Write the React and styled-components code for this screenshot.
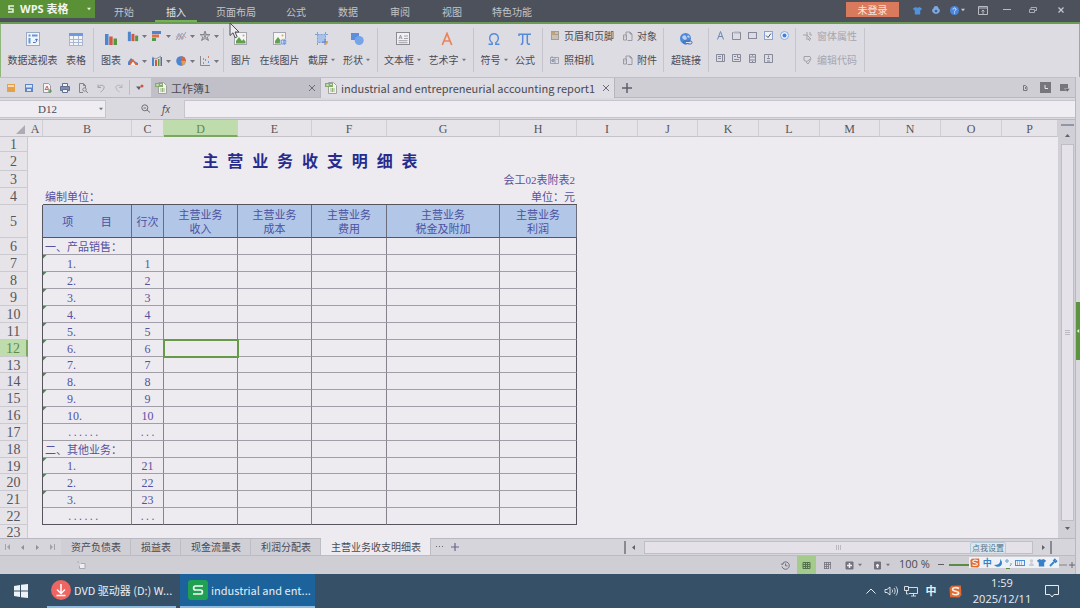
import React from "react";
import styled, { createGlobalStyle, css } from "styled-components";

const GlobalStyle = createGlobalStyle`
  * {
    box-sizing: border-box;
  }
  body {
    margin: 0;
    background: #edebf0;
    color: #4a4a52;
    font-family: "Open Sans", "Noto Sans CJK SC", sans-serif;
    font-size: 10px;
    line-height: 14px;
  }
  button,
  input {
    font: inherit;
    color: inherit;
    margin: 0;
    padding: 0;
    border: 0;
    border-radius: 0;
    background: none;
    outline: none;
  }
  svg {
    display: block;
    flex: none;
  }
`;

const Page = styled.div`
  display: flex;
  flex-direction: column;
  height: 100vh;
  overflow: hidden;
`;

/* ---------- title bar ---------- */
const TitleBar = styled.header`
  display: flex;
  flex: none;
  height: 24px;
  background: #4d515b;
  border-bottom: 2px solid #6a9a54;
  color: #c9cad0;
`;
const Brand = styled.button`
  display: flex;
  align-items: center;
  width: 95px;
  height: 18px;
  padding: 0 4px 0 8px;
  gap: 6px;
  background: #5a9136;
  color: #f1f5ee;
  font-size: 11px;
  font-weight: 700;
  white-space: nowrap;
  > :last-child {
    margin-left: auto;
  }
`;
const Menu = styled.nav`
  display: flex;
  flex: 1;
  padding-left: 3px;
`;
const MenuItem = styled.button`
  width: ${(p) => (p.$wide ? 68 : 52)}px;
  height: 22px;
  padding-top: 2px;
  background: ${(p) =>
    p.$active
      ? "linear-gradient(#76b153, #76b153) center bottom / 42px 2px no-repeat"
      : "none"};
  color: ${(p) => (p.$active ? "#e6e6ea" : "#c3c4ca")};
`;
const Login = styled.button`
  width: 53px;
  height: 15px;
  margin: 2px 9px 0 0;
  background: #da7a5c;
  color: #f6e6df;
`;
const WinButton = styled.button`
  display: flex;
  align-items: center;
  justify-content: center;
  gap: 2px;
  width: ${(p) => p.$w}px;
  height: 20px;
`;
const WinButtons = styled.div`
  display: flex;
  padding-right: 8px;
`;

/* ---------- ribbon ---------- */
const Ribbon = styled.section`
  display: flex;
  flex: none;
  height: 53px;
  background: #dedce3;
  border-left: 1px solid #8fb77b;
  border-right: 1px solid #8fb77b;
  > :first-child {
    margin-left: -1px;
  }
`;
const Group = styled.div`
  display: flex;
  flex: none;
  margin: 4px 0 5px;
  padding: 0 3px;
  border-right: 1px solid #c6c4cc;
`;
const BigButton = styled.button`
  display: flex;
  flex-direction: column;
  align-items: center;
  flex: none;
  width: ${(p) => p.$w}px;
  padding-top: 4px;
  gap: 7px;
  white-space: nowrap;
`;
const Label = styled.span`
  display: flex;
  align-items: center;
  gap: 3px;
`;
const MiniGrid = styled.div`
  display: grid;
  grid-template-columns: repeat(4, 20px);
  grid-template-rows: 14px 14px;
  gap: 11px 4px;
  padding: 1px 1px 0 2px;
`;
const MiniButton = styled.button`
  display: flex;
  align-items: center;
  gap: 3px;
`;
const CommandGrid = styled.div`
  display: grid;
  grid-template-columns: ${(p) => p.$columns};
  grid-template-rows: 14px 14px;
  row-gap: 10px;
  padding-top: 1px;
  color: ${(p) => (p.$disabled ? "#a7a5ad" : "inherit")};
`;
const Command = styled.button`
  display: flex;
  align-items: center;
  gap: 4px;
  padding-left: 3px;
  white-space: nowrap;
`;
const FormGrid = styled.div`
  display: grid;
  grid-template-columns: repeat(5, 16px);
  grid-template-rows: 14px 14px;
  row-gap: 9px;
`;
const IconButton = styled.button`
  display: flex;
  align-items: center;
  justify-content: center;
  gap: 4px;
  flex: none;
  width: ${(p) => (p.$w ? p.$w + "px" : "auto")};
  background: ${(p) => (p.$on ? "#a4cb8c" : "none")};
`;

/* ---------- workspace ---------- */
const Body = styled.div`
  display: flex;
  flex: 1;
  min-height: 0;
`;
const Work = styled.main`
  display: flex;
  flex-direction: column;
  flex: 1;
  min-width: 0;
`;
const Rail = styled.aside`
  display: flex;
  align-items: flex-start;
  flex: none;
  width: 4px;
  padding-top: 225px;
  background: #d9d8df;
  box-shadow: -1px 0 #b9b8c1;
`;
const RailHandle = styled.button`
  display: flex;
  align-items: center;
  width: 4px;
  height: 58px;
  background: #5d9440;
`;
const DocBar = styled.div`
  display: flex;
  flex: none;
  height: 21px;
  background: #cfced5;
  border-top: 1px solid #c0bfc8;
  border-bottom: 1px solid #b9b8c0;
`;
const Quick = styled.div`
  display: flex;
  flex: none;
  width: 151px;
  padding-left: 2px;
  background: #dad9df;
`;
const QuickDivider = styled.span`
  width: 1px;
  margin: 2px 1px;
  background: #bebdc5;
`;
const DocTab = styled.div`
  display: flex;
  align-items: center;
  flex: none;
  width: ${(p) => p.$w}px;
  padding: 0 4px;
  gap: 4px;
  margin-bottom: ${(p) => (p.$active ? -1 : 0)}px;
  background: ${(p) => (p.$active ? "#dfdee4" : "#c1c0c9")};
  border-right: 1px solid #b6b5be;
`;
const DocName = styled.button`
  flex: 1;
  text-align: left;
  white-space: nowrap;
  font-family: "Noto Sans CJK SC", sans-serif;
  font-size: 11px;
`;
const DocTools = styled.div`
  display: flex;
  margin-left: auto;
  padding-right: 1px;
`;
const FormulaBar = styled.div`
  display: flex;
  align-items: center;
  flex: none;
  height: 22px;
  background: #dad9df;
  border-bottom: 1px solid #b9b8c0;
`;
const NameBox = styled.div`
  display: flex;
  align-items: center;
  width: 106px;
  height: 18px;
  padding-right: 2px;
  background: #efedf2;
  border: 1px solid #c6c5cd;
  border-left: 0;
  input {
    flex: 1;
    min-width: 0;
    padding-right: 4px;
    text-align: center;
    font-family: "Liberation Serif", serif;
    font-size: 11px;
  }
`;
const FormulaTools = styled.div`
  display: flex;
  width: 78px;
  padding-left: 29px;
`;
const FormulaInput = styled.input`
  flex: 1;
  min-width: 0;
  height: 18px;
  background: #efedf2;
  border: 1px solid #c6c5cd;
`;

/* ---------- sheet ---------- */
const SheetArea = styled.div`
  display: flex;
  flex: 1;
  min-height: 0;
`;
const SheetView = styled.div`
  flex: 1;
  min-width: 0;
  overflow: hidden;
  background: #edebf0;
`;
const Sheet = styled.table`
  width: 100%;
  table-layout: fixed;
  border-spacing: 0;
  color: #5552a0;
  font-family: "Liberation Serif", "Noto Sans CJK SC", serif;
  font-size: 11px;
  line-height: 14px;
  td,
  th {
    padding: 0;
    white-space: nowrap;
  }
`;
const Corner = styled.th`
  height: 17px;
  background: #e6e4e8;
  border-bottom: 1px solid #c4c3ca;
  svg {
    margin: 3px 0 0 16px;
  }
`;
const ColHead = styled.th`
  && {
    padding-top: 2px;
  }
  height: 17px;
  font-size: 12px;
  font-weight: 400;
  line-height: 12px;
  background: ${(p) => (p.$on ? "#bfdcad" : "#e6e4e8")};
  color: ${(p) => (p.$on ? "#5f8a4a" : "#56555c")};
  border-bottom: ${(p) => (p.$on ? "2px solid #7ba763" : "1px solid #c4c3ca")};
  border-right: 1px solid #d0ced5;
`;
const RowHead = styled.th`
  && {
    padding-top: 2px;
  }
  height: ${(p) => p.$h}px;
  font-size: 14px;
  font-weight: 400;
  line-height: 12px;
  background: ${(p) => (p.$on ? "#bfdcad" : "#e6e4e8")};
  color: ${(p) => (p.$on ? "#5f8a4a" : "#56555c")};
  border-bottom: ${(p) => (p.$last ? 0 : "1px solid #cccad1")};
  border-right: ${(p) => (p.$on ? "2px solid #7ba763" : "1px solid #cccad1")};
`;
const Margin = styled.td`
  border-right: ${(p) => (p.$edge ? "1px solid #56555d" : 0)};
`;
const Title = styled.td`
  && {
    white-space: pre;
  }
  text-align: center;
  font-family: "Liberation Sans", "Noto Sans CJK SC", sans-serif;
  font-size: 16px;
  font-weight: 700;
  color: #262c8e;
`;
const Note = styled.td`
  && {
    padding: 1px 2px 0;
  }
  text-align: ${(p) => p.$align};
  border-bottom: ${(p) => (p.$edge ? "1px solid #56555d" : 0)};
`;
const HeadCell = styled.th`
  && {
    padding-top: 2px;
    white-space: pre;
  }
  font-weight: 400;
  background: #b2c6e7;
  color: #4a51a0;
  border-right: 1px solid #6b6c7c;
  border-bottom: 1px solid #56555d;
`;
const Cell = styled.td`
  && {
    padding: 1px 0 0 ${(p) => (p.$item ? (p.$indent ? 24 : 2) : 0)}px;
  }
  text-align: ${(p) => (p.$item ? "left" : "center")};
  font-size: ${(p) => (p.$num ? 12 : 11)}px;
  border-right: 1px solid ${(p) => (p.$last ? "#56555d" : "#85838b")};
  border-bottom: 1px solid ${(p) => (p.$bottom ? "#56555d" : "#a09ea6")};
  ${(p) =>
    p.$flag &&
    css`
      background: linear-gradient(135deg, #3f8a4c 2px, transparent 3px);
    `}
  ${(p) =>
    p.$selected &&
    css`
      outline: 2px solid #659a49;
      outline-offset: -1px;
    `}
`;
const Dots = styled.span`
  font-family: "Liberation Mono", monospace;
  font-size: 9px;
  line-height: 12px;
`;
const VScroll = styled.div`
  display: flex;
  flex-direction: column;
  align-items: center;
  flex: none;
  width: 18px;
  padding: 4px 0 2px;
  background: #d1d0d7;
`;
const Splitter = styled.span`
  width: 13px;
  height: 2px;
  background: #9295a4;
`;
const VThumb = styled.div`
  display: flex;
  align-items: center;
  justify-content: center;
  flex: 1;
  width: 13px;
  background: #e5e3e9;
  border: 1px solid #bfbec7;
`;
const ScrollButton = styled.button`
  display: flex;
  align-items: center;
  justify-content: center;
  flex: none;
  width: ${(p) => (p.$side ? 14 : 18)}px;
  height: ${(p) => (p.$side ? 15 : 18)}px;
`;

/* ---------- sheet tabs and status ---------- */
const SheetBar = styled.div`
  display: flex;
  flex: none;
  height: 18px;
  background: #d6d5db;
  border-top: 1px solid #b9b8c0;
  border-bottom: 1px solid #bcbbc4;
`;
const SheetNav = styled.div`
  display: flex;
  width: 61px;
  color: #9b9aa4;
`;
const SheetTab = styled.button`
  flex: none;
  padding: 0 9px 0 10px;
  white-space: nowrap;
  background: ${(p) => (p.$active ? "#edebf0" : "#d0cfd6")};
  border-right: 1px solid #bebdc6;
  margin-top: ${(p) => (p.$active ? -1 : 0)}px;
`;
const HScroll = styled.div`
  display: flex;
  align-items: center;
  flex: none;
  width: 42%;
  margin-left: auto;
  padding-right: 24px;
`;
const Bar = styled.span`
  width: 2px;
  height: 13px;
  background: #8a8994;
`;
const HThumb = styled.div`
  position: relative;
  display: flex;
  align-items: center;
  justify-content: center;
  flex: 1;
  height: 13px;
  margin: 0 3px 0 4px;
  background: #e4e2e8;
  border: 1px solid #c0bfc8;
`;
const Tip = styled.span`
  position: absolute;
  right: 26px;
  top: 0;
  width: 36px;
  height: 12px;
  background: #dce7ee;
  border: 1px solid #b5cbd9;
  border-radius: 2px;
  color: #4e7391;
  font-size: 8px;
  line-height: 10px;
  text-align: center;
  white-space: nowrap;
`;
const Status = styled.footer`
  display: flex;
  flex: none;
  height: 18px;
  background: #cfced5;
`;
const StatusLeft = styled.div`
  display: flex;
  align-items: center;
  flex: 1;
  padding-left: 77px;
`;
const ZoomText = styled.span`
  width: 38px;
  padding-left: 4px;
  font-size: 11px;
  line-height: 16px;
`;
const ZoomTrack = styled.div`
  position: relative;
  display: flex;
  align-items: center;
  width: 118px;
  input {
    width: 100%;
    height: 2px;
    appearance: none;
    background: linear-gradient(90deg, #5d8b45 50%, #a9a8b2 50%);
  }
  input::-webkit-slider-thumb {
    appearance: none;
    width: 4px;
    height: 8px;
    background: #5d8b45;
  }
`;
const Ime = styled.div`
  position: absolute;
  left: 20px;
  top: 1px;
  display: flex;
  align-items: center;
  justify-content: space-around;
  width: 90px;
  height: 11px;
  background: #eef1f6;
  color: #3681c8;
  font-size: 9px;
  font-weight: 700;
  line-height: 11px;
`;

/* ---------- taskbar ---------- */
const Taskbar = styled.footer`
  display: flex;
  flex: none;
  height: 34px;
  background: #365067;
  color: #e8edf1;
  font-size: 11px;
`;
const Start = styled.button`
  display: flex;
  align-items: center;
  justify-content: center;
  width: 41px;
`;
const TaskButton = styled.button`
  display: flex;
  align-items: center;
  width: ${(p) => p.$w}px;
  margin-left: ${(p) => (p.$active ? 4 : 6)}px;
  padding-left: ${(p) => (p.$active ? 8 : 4)}px;
  gap: 3px;
  white-space: nowrap;
  font-family: "Noto Sans CJK SC", sans-serif;
  background: ${(p) => (p.$active ? "#1c639b" : "none")};
  border-bottom: 2px solid #8dbce0;
`;
const Tray = styled.div`
  display: flex;
  align-items: center;
  margin-left: auto;
  padding-right: 16px;
`;
const Lang = styled.span`
  width: 20px;
  text-align: center;
  font-weight: 700;
`;
const Clock = styled.time`
  width: 66px;
  text-align: center;
  line-height: 16px;
  margin-right: 5px;
`;
const Pointer = styled.svg`
  position: absolute;
  left: 229px;
  top: 22px;
`;

/* ---------- icons ---------- */
const Svg = ({ s = 12, w, h, children, ...rest }) => (
  <svg
    width={w || s}
    height={h || s}
    viewBox={`0 0 ${w || s} ${h || s}`}
    fill="none"
    stroke="currentColor"
    aria-hidden="true"
    {...rest}
  >
    {children}
  </svg>
);
const Caret = ({ dir = "down", c = "#77767f", s = 5 }) => {
  const d = {
    down: "M0 1h5L2.500 4z",
    up: "M0 4h5L2.500 1z",
    left: "M4 0v5L1 2.500z",
    right: "M1 0v5l3-2.500z",
  }[dir];
  return (
    <svg width={s} height={s} viewBox="0 0 5 5" fill={c} aria-hidden="true">
      <path d={d} />
    </svg>
  );
};
const PivotIcon = () => (
  <Svg s={14} stroke="#9aa9c4">
    <rect x=".5" y=".5" width="13" height="13" fill="#f1f4f9" />
    <path d="M2.500 2.500h2v2h-2zM6 2.500h5.500v2H6zM2.500 6h2v5.500h-2z" fill="#6795d6" stroke="none" />
    <path d="M7 10.500h2c1 0 1.500-.7 1.500-1.500V7M9 8.300l1.500-1.500L12 8.300" stroke="#4b78bd" />
  </Svg>
);
const TableIcon = () => (
  <Svg s={14} stroke="#a9b6cf">
    <rect x=".5" y="1.500" width="13" height="12" fill="#f4f5f9" />
    <path d="M0 1h14v3H0z" fill="#6f9bdc" stroke="none" />
    <path d="M.5 7.500h13M.5 10.500h13M4.500 4v9.500M9.500 4v9.500" />
  </Svg>
);
const BarsIcon = ({ s = 14 }) => (
  <svg width={s} height={s} viewBox="0 0 14 14" aria-hidden="true">
    <path d="M1 2h3.500v11H1z" fill="#4f84cf" />
    <path d="M5.200 4.500h3.500V13H5.200z" fill="#d25a42" />
    <path d="M9.500 6.500H13V13H9.500z" fill="#549846" />
  </svg>
);
const HBarsIcon = () => (
  <Svg stroke="none">
    <path d="M1 1h9v3H1z" fill="#4f84cf" />
    <path d="M1 4.500h7v3H1z" fill="#d9714a" />
    <path d="M1 8h4v3H1z" fill="#549846" />
  </Svg>
);
const LineIcon = () => (
  <Svg strokeWidth=".8">
    <path d="M1 10l3-5 3 3 4-6" stroke="#6d8fc3" />
    <path d="M1 6l3 4 3-7 4 5" stroke="#c98d80" />
    <circle cx="4" cy="5" r="1.200" stroke="#6d8fc3" fill="#dedce3" />
    <circle cx="7" cy="8" r="1.200" stroke="#888" fill="#dedce3" />
  </Svg>
);
const RadarIcon = () => (
  <Svg stroke="#77767f">
    <path d="M6 1l1.300 3.500H11L8.300 7l1.200 3.500L6 8.500l-3.500 2L3.700 7 1 4.500h3.700z" strokeWidth=".8" />
    <path d="M6 2v6M3 5h6M3 10l3-4 3 4" strokeWidth=".7" />
  </Svg>
);
const AreaIcon = () => (
  <Svg stroke="none">
    <path d="M1 10V7l3-4 3 3 4 2v2z" fill="#4f84cf" />
    <path d="M3 10V6l3-2 3 4 2 2z" fill="#d9643f" />
    <path d="M3.500 10L6 6.500 8.500 10z" fill="#f4f0ee" />
  </Svg>
);
const ComboIcon = () => (
  <Svg stroke="none">
    <path d="M1 3h2v8H1z" fill="#4f84cf" />
    <path d="M4 5h2v6H4z" fill="#d25a42" />
    <path d="M7 4h1.500v7H7z" fill="#549846" />
    <path d="M9.500 2H11v9H9.500z" fill="#5b6f8f" />
    <path d="M1 2l4 2 5-3" stroke="#777" strokeWidth=".7" fill="none" />
  </Svg>
);
const PieIcon = () => (
  <Svg stroke="none">
    <circle cx="6" cy="6" r="4.800" fill="#4f84cf" />
    <path d="M6 6V1.200A4.800 4.800 0 0 1 10.800 6z" fill="#d9643f" />
    <path d="M6 6h4.800A4.800 4.800 0 0 1 7.500 10.500z" fill="#e0a04e" />
  </Svg>
);
const ScatterIcon = () => (
  <Svg stroke="#8a8993">
    <path d="M1.500 1v9.500H11" />
    <path d="M4 8h1M6 5h1M9 7h1" stroke="#4f84cf" strokeWidth="1.500" />
    <path d="M4 4h1M9 2h1" stroke="#d9643f" strokeWidth="1.500" />
  </Svg>
);
const PictureIcon = ({ globe }) => (
  <Svg s={14} stroke="#a6a5ae">
    <rect x=".5" y=".5" width="12" height="12" fill="#f5f5f6" />
    <path d="M2 11.500V9l3-4 3 4 1.500-2 2 2.500v2z" fill="#61a04c" stroke="none" />
    <circle cx="9.500" cy="3.500" r="1" fill="#e0a04e" stroke="none" />
    {globe && (
      <g stroke="#eef" strokeWidth=".6">
        <circle cx="10.500" cy="10" r="3.300" fill="#6f95cf" />
        <path d="M7.500 10h6M10.500 7c-1.500 2-1.500 4 0 6" />
      </g>
    )}
  </Svg>
);
const CropIcon = () => (
  <Svg s={14} stroke="#7c9fd6">
    <rect x="2.500" y="2.500" width="8" height="8" fill="#a9c2ea" strokeDasharray="2 1" />
    <path d="M0 2.500h2M2.500 0v2M11 2.500h2M10.500 0v2M2.500 11v2" />
    <path d="M7 10h6M10 7v6" stroke="#5b82c4" />
    <path d="M10 12.500l2-2" stroke="#e0a04e" strokeWidth="2" />
  </Svg>
);
const ShapesIcon = () => (
  <Svg s={14} stroke="none">
    <path d="M1 1h8v7H1z" fill="#5b8fdd" />
    <circle cx="9.200" cy="8.500" r="4.500" fill="#76a4e8" />
  </Svg>
);
const TextBoxIcon = () => (
  <Svg s={14} stroke="#8b8a94">
    <rect x=".5" y=".5" width="13" height="12" fill="#f1f0f4" />
    <path d="M3 7l1.500-4L6 7M3.500 5.800h2M8 4h4M8 6.500h4M2.500 8.700h9M2.500 10.700h9" strokeWidth=".8" />
  </Svg>
);
const ArtIcon = () => (
  <Svg s={14} stroke="#e98458" strokeWidth="1.700">
    <path d="M2.300 13L7 1.500 11.700 13M4 9h6" />
  </Svg>
);
const OmegaIcon = () => (
  <Svg s={14} stroke="#548bd8" strokeWidth="1.400">
    <path d="M1.500 12.300h3.700v-1.500C1 7.500 2.500 1.700 7 1.700s6 5.800 1.800 9.100v1.500h3.700" />
  </Svg>
);
const PiIcon = () => (
  <Svg s={14} stroke="#548bd8" strokeWidth="1.500">
    <path d="M1 4V2.300h12M4.700 2.500V10c0 1.500-.7 2.500-2 2.500M9.300 2.500v8c0 1.500 1.200 2 2.700 1.500" />
  </Svg>
);
const LinkIcon = () => (
  <Svg s={14} stroke="none">
    <circle cx="6.500" cy="6.500" r="5.500" fill="#4f88d6" />
    <path d="M3 5l2-2 2 1 1 3-2 1-2-1zM9 3l2 2-1 1-2-1z" fill="#b8d1f3" />
    <rect x="4.500" y="9" width="4.500" height="3" rx="1.500" stroke="#476ca8" />
    <rect x="8.500" y="9" width="4.500" height="3" rx="1.500" stroke="#476ca8" />
    <path d="M7 10.500h4" stroke="#dfe7f3" />
  </Svg>
);
const HeaderIcon = () => (
  <Svg s={11} stroke="none">
    <path d="M2 0h8v9H2z" fill="#a59b90" />
    <path d="M2.500 1.500h3v2h-3z" fill="#e2a34e" />
    <path d="M6 2h3M3 5h6M3 7h6" stroke="#e9e5e0" />
  </Svg>
);
const CameraIcon = () => (
  <Svg s={11} stroke="#9193a3" strokeWidth=".8">
    <path d="M1.500 2.500h8v6h-8zM6 2.500v6M3 1v1.500M7.500 4.500h1" />
    <circle cx="4" cy="5.500" r="1.300" fill="#8aa3c8" />
  </Svg>
);
const ObjectIcon = () => (
  <Svg s={11} stroke="#8b8a94" strokeWidth=".8">
    <path d="M4 4V1h4l2 2v6.500H5.500M8 1v2h2" />
    <path d="M1.500 4h3v5h-3zM2.500 6h1" />
  </Svg>
);
const FormIcon = ({ type }) => (
  <Svg s={11} stroke="#858999">
    {type === "text" && <path d="M2.500 9.500l3-8 3 8M3.500 6.500h4" stroke="#6d87b3" />}
    {type === "group" && <path d="M1.500 2.500v7h8v-7M1.500 2.500h1M8.500 2.500h1M4 1.500v2M6 1.500v2M8 1.500v2" />}
    {type === "button" && <rect x="1.500" y="2.500" width="8" height="6" />}
    {type === "check" && (
      <>
        <rect x="1.500" y="1.500" width="8" height="8" fill="#edf0f7" stroke="#8aa3cf" />
        <path d="M3 5.500l2 2 3-4" stroke="#48526b" />
      </>
    )}
    {type === "radio" && (
      <>
        <circle cx="5.500" cy="5.500" r="4" stroke="#84abe5" fill="#edf2fb" />
        <circle cx="5.500" cy="5.500" r="2" fill="#4680d6" stroke="none" />
      </>
    )}
    {type === "list" && <path d="M1.500 1.500h8v7h-8zM7.500 1.500v7M3 3.500h3M3 5.500h3" />}
    {type === "combo" && <path d="M1.500 1.500h8v7h-8zM6.500 1.500v3h3M3 3.500h2M3 6.500h5" />}
    {type === "scroll" && <path d="M2.500 1.500h6v8h-6zM2.500 4h6M2.500 7h6M5 2.700h1M5 8.500h1" />}
    {type === "spin" && <path d="M1.500 1.500h8v8h-8zM4 5.500h3M5.500 2.500v2M4 8h3" />}
  </Svg>
);
const PropIcon = () => (
  <Svg s={11} stroke="#a3a1aa">
    <path d="M1 4h4V1M5 9V4l4 4H6l2 2M8 1v3h2" />
  </Svg>
);
const CodeIcon = () => (
  <Svg s={11} stroke="#a3a1aa">
    <path d="M2 1.500h6l1 2-4 3-3-1zM4 7l2 2M9 4L6 9" />
  </Svg>
);
const SheetFileIcon = () => (
  <Svg s={12} stroke="#a0a29f">
    <path d="M3.500.5h5l3 3v8h-8z" fill="#f3f4f2" />
    <path d="M0 1h8v4H0z" fill="#84ad68" stroke="none" />
    <path d="M1.500 2l2 2M3.500 2l-2 2M5 2.500h2" stroke="#eef3ea" strokeWidth=".8" />
    <path d="M5 7h5M5 9h5M7.500 6v4" stroke="#84ad68" strokeWidth=".8" />
  </Svg>
);
const CloseIcon = () => (
  <Svg s={8} stroke="#6d6c76">
    <path d="M1 1l6 6M7 1L1 7" />
  </Svg>
);
const PlusIcon = ({ c = "#5f5e69", s = 10 }) => (
  <svg width={s} height={s} viewBox="0 0 10 10" stroke={c} strokeWidth="1.500" aria-hidden="true">
    <path d="M5 0v10M0 5h10" />
  </svg>
);
const ShirtIcon = ({ c = "#4f92dd", s = 9 }) => (
  <svg width={s} height={s} viewBox="0 0 10 10" fill={c} aria-hidden="true">
    <path d="M3 1c1 1.200 3 1.200 4 0l3 1.800-1.200 2.200L8 4.500V9.500H2v-5L1.200 5 0 2.800z" />
  </svg>
);
const SogouIcon = ({ s = 12 }) => (
  <svg width={s} height={s} viewBox="0 0 12 12" aria-hidden="true">
    <path d="M2 .8l9-.3.5 8.700-2 2.300-8.500-.3L.5 3z" fill="#df6a32" />
    <path
      d="M9.300 3.200C7 1.800 3.300 2.400 3.300 4.100c0 2 5.600 1.200 5.600 3.300 0 1.800-3.700 2.100-6.100.6"
      fill="none"
      stroke="#fbefe7"
      strokeWidth="1.500"
    />
  </svg>
);
const StatusIcon = ({ type }) => (
  <Svg s={9} stroke="#73727d">
    {type === "history" && <path d="M1.500 2.500A3.700 3.700 0 1 1 1 5.500M0 3l1.700.5L2.500 2M4.500 2.500v2.300h2" />}
    {type === "grid" && <path d="M1 1.500h7v6H1zM1 3.500h7M1 5.500h7M3.500 1v7M5.500 1v7" stroke="#52704a" />}
    {type === "page" && <path d="M1 1.500h7M1 3.500h7M1 5.500h5M1 7.500h5M1.500 1v7M3.500 1v7M5.500 1v7M7.500 1v7" strokeWidth=".8" />}
    {type === "cross" && (
      <>
        <path d="M1 1h7v7H1z" fill="#73727d" />
        <path d="M4.500 2v5M2 4.500h5" stroke="#eeedf1" strokeWidth="1.500" />
      </>
    )}
    {type === "read" && (
      <>
        <path d="M1.500 1h6v7h-6z" fill="#73727d" />
        <path d="M4.500 3v4M3 4.500h3" stroke="#eeedf1" strokeWidth="1.500" />
      </>
    )}
  </Svg>
);

/* ---------- data ---------- */
const menu = ["开始", "插入", "页面布局", "公式", "数据", "审阅", "视图", "特色功能"];
const miniCharts = [
  ["柱形图", <BarsIcon s={12} />],
  ["条形图", <HBarsIcon />],
  ["折线图", <LineIcon />],
  ["雷达图", <RadarIcon />],
  ["面积图", <AreaIcon />],
  ["组合图", <ComboIcon />],
  ["饼图", <PieIcon />],
  ["散点图", <ScatterIcon />],
];
const formTypes = ["text", "group", "button", "check", "radio", "list", "combo", "scroll", "spin"];
const colWidths = [28, 15, 89, 32, 74, 74, 75, 113, 77, 61, 60, 61, 61, 60, 61, 61];
const letters = "ABCDEFGHIJKLMNOP".split("");
const heads = [
  "项          目",
  "行次",
  "主营业务\n收入",
  "主营业务\n成本",
  "主营业务\n费用",
  "主营业务\n税金及附加",
  "主营业务\n利润",
];
const rows = [
  ["一、产品销售：", ""],
  ...Array.from({ length: 10 }, (_, i) => [`${i + 1}.`, `${i + 1}`]),
  ["......", "..."],
  ["二、其他业务：", ""],
  ["1.", "21"],
  ["2.", "22"],
  ["3.", "23"],
  ["......", "..."],
];
const sheets = ["资产负债表", "损益表", "现金流量表", "利润分配表", "主营业务收支明细表"];

function Big({ w, icon, label, caret }) {
  return (
    <BigButton $w={w}>
      {icon}
      <Label>
        {label}
        {caret && <Caret s={4} />}
      </Label>
    </BigButton>
  );
}

function RibbonBar() {
  return (
    <Ribbon>
      <Group>
        <Big w={59} icon={<PivotIcon />} label="数据透视表" />
        <Big w={28} icon={<TableIcon />} label="表格" />
      </Group>
      <Group>
        <Big w={28} icon={<BarsIcon />} label="图表" />
        <MiniGrid>
          {miniCharts.map(([name, icon]) => (
            <MiniButton key={name} aria-label={name}>
              {icon}
              <Caret />
            </MiniButton>
          ))}
        </MiniGrid>
      </Group>
      <Group>
        <Big w={28} icon={<PictureIcon />} label="图片" />
        <Big w={49} icon={<PictureIcon globe />} label="在线图片" />
        <Big w={35} icon={<CropIcon />} label="截屏" caret />
        <Big w={35} icon={<ShapesIcon />} label="形状" caret />
      </Group>
      <Group>
        <Big w={43} icon={<TextBoxIcon />} label="文本框" caret />
        <Big w={46} icon={<ArtIcon />} label="艺术字" caret />
      </Group>
      <Group>
        <Big w={34} icon={<OmegaIcon />} label="符号" caret />
        <Big w={28} icon={<PiIcon />} label="公式" />
      </Group>
      <Group>
        <CommandGrid $columns="73px 41px">
          <Command><HeaderIcon />页眉和页脚</Command>
          <Command><ObjectIcon />对象</Command>
          <Command><CameraIcon />照相机</Command>
          <Command><ObjectIcon />附件</Command>
        </CommandGrid>
      </Group>
      <Group>
        <Big w={38} icon={<LinkIcon />} label="超链接" />
      </Group>
      <Group>
        <FormGrid>
          {formTypes.map((t) => (
            <IconButton key={t} aria-label={t}>
              <FormIcon type={t} />
            </IconButton>
          ))}
        </FormGrid>
      </Group>
      <Group>
        <CommandGrid $columns="62px" $disabled>
          <Command><PropIcon />窗体属性</Command>
          <Command><CodeIcon />编辑代码</Command>
        </CommandGrid>
      </Group>
    </Ribbon>
  );
}

function DocumentBar() {
  return (
    <DocBar>
      <Quick>
        <IconButton $w={18} aria-label="打开">
          <Svg s={10} stroke="none"><path d="M1 1h8v8H1z" fill="#e5a04a" /><path d="M2 2h6v2H2z" fill="#f5dcb4" /></Svg>
        </IconButton>
        <IconButton $w={18} aria-label="保存">
          <Svg s={10} stroke="none"><path d="M1 1h8v8H1z" fill="#5c86cb" /><path d="M2 2h6v2.500H2zM3 6h4v2H3z" fill="#dbe5f5" /></Svg>
        </IconButton>
        <IconButton $w={18} aria-label="输出为PDF">
          <Svg s={10} stroke="#9b9aa4"><path d="M1.500.5h5l2 2v7h-7z" fill="#f3f2f5" /><path d="M3 7l2-4 1.500 3.500H3" stroke="#c9655a" /><path d="M6 8h4M8 6v4" stroke="#4c9a4c" /></Svg>
        </IconButton>
        <IconButton $w={18} aria-label="打印">
          <Svg s={10} stroke="#62708f"><path d="M2.500 3.500v-3h5v3" fill="#f3f2f5" /><path d="M.5 3.500h9v4h-9z" fill="#7f8db0" /><path d="M2.500 6.500h5v3h-5z" fill="#f3f2f5" /></Svg>
        </IconButton>
        <IconButton $w={18} aria-label="打印预览">
          <Svg s={10} stroke="#85848e"><path d="M5 9.500H1.500v-9h4l2 2V5M5.500.5v2h2" /><circle cx="6.500" cy="6.500" r="1.700" /><path d="M8 8l2 2" /></Svg>
        </IconButton>
        <IconButton $w={18} aria-label="撤销">
          <Svg s={10} stroke="#a3a2ac"><path d="M2 1.500v3h3M2 4.300C4 1 9 2 8 5c-.5 2-2 3-3.500 4" /></Svg>
        </IconButton>
        <IconButton $w={18} aria-label="恢复">
          <Svg s={10} stroke="#b5b4bd"><path d="M8 1.500v3H5M8 4.300C6 1 1 2 2 5c.5 2 2 3 3.500 4" /></Svg>
        </IconButton>
        <QuickDivider />
        <IconButton $w={18} aria-label="更多">
          <Svg s={8} stroke="none"><path d="M0 2.500h5L3 6z" fill="#5d5c66" /><circle cx="6" cy="2" r="1.500" fill="#d8503e" /></Svg>
        </IconButton>
      </Quick>
      <DocTab $w={170}>
        <SheetFileIcon />
        <DocName>工作簿1</DocName>
        <IconButton aria-label="关闭"><CloseIcon /></IconButton>
      </DocTab>
      <DocTab $w={294} $active>
        <SheetFileIcon />
        <DocName>industrial and entrepreneurial accounting report1</DocName>
        <IconButton aria-label="关闭"><CloseIcon /></IconButton>
      </DocTab>
      <IconButton $w={24} aria-label="新建"><PlusIcon /></IconButton>
      <DocTools>
        <IconButton $w={20} aria-label="文档">
          <Svg s={6} stroke="#77767f"><path d="M1.500.5h2l1.500 1.500v3.500H1.500zM3.500 2v2" /></Svg>
        </IconButton>
        <IconButton $w={20} aria-label="历史">
          <Svg s={11} stroke="none"><path d="M0 0h11v11H0z" fill="#77767f" /><path d="M5 3v3.500h3" stroke="#e6e5ea" /></Svg>
        </IconButton>
        <IconButton $w={20} aria-label="窗口">
          <Svg s={10} stroke="none"><path d="M0 1h8v7H0z" fill="#77767f" /><path d="M4.500 5.500H10L7.300 9z" fill="#666570" stroke="#cfced5" strokeWidth=".5" /></Svg>
        </IconButton>
      </DocTools>
    </DocBar>
  );
}

function Worksheet() {
  const line = (v) => (/^\.+$/.test(v) ? <Dots>{v}</Dots> : v);
  return (
    <Sheet>
      <colgroup>
        {colWidths.map((w, i) => (
          <col key={i} width={w} />
        ))}
        <col />
      </colgroup>
      <thead>
        <tr>
          <Corner><Svg s={9} stroke="none"><path d="M9 0v9H0z" fill="#adacb4" /></Svg></Corner>
          {letters.map((l) => (
            <ColHead key={l} $on={l === "D"}>{l}</ColHead>
          ))}
        </tr>
      </thead>
      <tbody>
        <tr>
          <RowHead $h={15}>1</RowHead>
        </tr>
        <tr>
          <RowHead $h={19}>2</RowHead>
          <td />
          <Title colSpan={7}>{"主营业务收支明细表".split("").join("  ")}</Title>
        </tr>
        <tr>
          <RowHead $h={17}>3</RowHead>
          <td />
          <Note colSpan={7} $align="right">会工02表附表2</Note>
        </tr>
        <tr>
          <RowHead $h={17}>4</RowHead>
          <td />
          <Note colSpan={2} $align="left" $edge>编制单位：</Note>
          <Note colSpan={5} $align="right" $edge>单位：元</Note>
        </tr>
        <tr>
          <RowHead $h={33}>5</RowHead>
          <Margin $edge />
          {heads.map((h) => (
            <HeadCell key={h}>{h}</HeadCell>
          ))}
        </tr>
        {rows.map(([item, num], i) => {
          const n = i + 6;
          const bottom = i === rows.length - 1;
          return (
            <tr key={n}>
              <RowHead $h={n === 13 || n === 19 ? 16 : 17} $on={n === 12}>{n}</RowHead>
              <Margin $edge />
              <Cell $item $num={num !== ""} $indent={num !== ""} $flag={/^\d/.test(item)} $bottom={bottom}>
                {line(item)}
              </Cell>
              <Cell $num $bottom={bottom}>{line(num)}</Cell>
              {["D", "E", "F", "G", "H"].map((c) => (
                <Cell key={c} $bottom={bottom} $last={c === "H"} $selected={c === "D" && n === 12} />
              ))}
            </tr>
          );
        })}
        <tr>
          <RowHead $h={13} $last>23</RowHead>
        </tr>
      </tbody>
    </Sheet>
  );
}

function BottomBars() {
  return (
    <>
      <SheetBar>
        <SheetNav>
          <IconButton $w={15} aria-label="第一张"><Svg s={6} stroke="none"><path d="M0 0h1v6H0zM5 0v6L2 3z" fill="#a3a2ac" /></Svg></IconButton>
          <IconButton $w={15} aria-label="上一张"><Caret dir="left" c="#8f8e99" /></IconButton>
          <IconButton $w={14} aria-label="下一张"><Caret dir="right" c="#8f8e99" /></IconButton>
          <IconButton $w={15} aria-label="最后一张"><Svg s={6} stroke="none"><path d="M5 0h1v6H5zM1 0v6l3-3z" fill="#a3a2ac" /></Svg></IconButton>
        </SheetNav>
        {sheets.map((s) => (
          <SheetTab key={s} $active={s.length > 5}>{s}</SheetTab>
        ))}
        <IconButton $w={18} aria-label="更多工作表">
          <Svg w={8} h={2} stroke="none"><path d="M0 0h1v1H0zM3 0h1v1H3zM6 0h1v1H6z" fill="#66656f" /></Svg>
        </IconButton>
        <IconButton $w={12} aria-label="新建工作表"><PlusIcon s={8} c="#66678a" /></IconButton>
        <HScroll>
          <Bar />
          <ScrollButton $side aria-label="向左"><Caret dir="left" c="#62616b" /></ScrollButton>
          <HThumb>
            <Svg w={6} h={5} stroke="#bbbac2"><path d="M.5 0v5M2.500 0v5M4.500 0v5" /></Svg>
            <Tip>点我设置</Tip>
          </HThumb>
          <ScrollButton $side aria-label="向右"><Caret dir="right" c="#62616b" /></ScrollButton>
          <Bar />
        </HScroll>
      </SheetBar>
      <Status>
        <StatusLeft>
          <Svg s={9} stroke="#a9a8b1"><path d="M0 1h2M4 2.500h4v5H2.500V5" fill="#efeef2" /></Svg>
        </StatusLeft>
        <IconButton $w={24} aria-label="历史记录"><StatusIcon type="history" /></IconButton>
        <IconButton $w={19} $on aria-label="普通视图"><StatusIcon type="grid" /></IconButton>
        <IconButton $w={22} aria-label="分页预览"><StatusIcon type="page" /></IconButton>
        <IconButton $w={30} aria-label="阅读模式"><StatusIcon type="cross" /><Caret s={4} /></IconButton>
        <IconButton $w={27} aria-label="护眼模式"><StatusIcon type="read" /><Caret s={4} /></IconButton>
        <ZoomText>100 %</ZoomText>
        <IconButton $w={16} aria-label="缩小"><Svg w={6} h={2} stroke="none"><path d="M0 0h6v1H0z" fill="#5f5e69" /></Svg></IconButton>
        <ZoomTrack>
          <input type="range" aria-label="显示比例" min="10" max="190" defaultValue="100" />
          <Ime>
            <SogouIcon s={10} />
            中
            <Svg s={8} stroke="none"><path d="M6 0c1 4-1 6-6 6 3 3 8 2 8-2 0-2-1-3-2-4z" fill="#3681c8" /></Svg>
            <Svg s={8} stroke="#5b98d3"><circle cx="2" cy="2" r="1.200" /><path d="M6 4v1.500L5 7" /></Svg>
            <Svg w={10} h={8} stroke="#4a8fd2"><rect x=".5" y="1.500" width="9" height="5" /><path d="M2 3h6M2 5h6" strokeDasharray="1 1" /></Svg>
            <Svg s={7} stroke="none"><circle cx="3.500" cy="2" r="1.700" fill="#c9ccd2" /><path d="M1 7c0-4 5-4 5 0z" fill="#c9ccd2" /></Svg>
            <ShirtIcon c="#3681c8" />
            <Svg s={9} stroke="#3681c8" strokeWidth="1.800"><path d="M1 8l4-4M8 2.500L6.500 4 5 2.500 6.500 1" /></Svg>
          </Ime>
        </ZoomTrack>
        <IconButton $w={9} aria-label="放大"><PlusIcon s={6} /></IconButton>
      </Status>
    </>
  );
}

function WindowsTaskbar() {
  return (
    <Taskbar>
      <Start aria-label="开始菜单">
        <Svg s={14} stroke="none"><path d="M0 2l6-1v5.500H0zM7 .8L14 0v6.500H7zM0 7.500h6V13l-6-1zM7 7.500h7V14l-7-.8z" fill="#eef2f5" /></Svg>
      </Start>
      <TaskButton $w={129}>
        <Svg s={20} stroke="none"><circle cx="10" cy="10" r="10" fill="#ee6561" /><path d="M10 4v9M6 9.500l4 4 4-4M5.500 15.500h9" stroke="#fff" strokeWidth="1.500" fill="none" /></Svg>
        DVD 驱动器 (D:) W...
      </TaskButton>
      <TaskButton $w={135} $active>
        <Svg s={20} stroke="none"><rect width="20" height="20" rx="3" fill="#1fa052" /><path d="M15 6H7.500C5 6 5 10 7.500 10h5c2.500 0 2.500 4 0 4H5" stroke="#f3faf5" strokeWidth="1.700" fill="none" /></Svg>
        industrial and ent...
      </TaskButton>
      <Tray>
        <IconButton $w={20} aria-label="显示隐藏的图标"><Svg w={10} h={6}><path d="M.5 5.500L5 1l4.500 4.500" /></Svg></IconButton>
        <IconButton $w={20} aria-label="音量"><Svg w={14} h={12}><path d="M1 4.500h2L6 2v8L3 7.500H1zM8 4.500c.8 1 .8 2 0 3M10 3c1.500 2 1.500 4 0 6M12 1.500c2 3 2 6 0 9" strokeWidth=".9" /></Svg></IconButton>
        <IconButton $w={20} aria-label="网络"><Svg w={14} h={12}><path d="M4 2.500h9.500v6H5M7 11h5M9.500 8.500V11M.5 1.500h4v4h-4zM2.500 5.500V9h2" strokeWidth=".9" /></Svg></IconButton>
        <Lang>中</Lang>
        <IconButton $w={28} aria-label="输入法"><SogouIcon s={13} /></IconButton>
        <Clock>1:59<br />2025/12/11</Clock>
        <IconButton $w={24} aria-label="通知"><Svg s={14}><path d="M.5 1.500h13v9H9l-2 2.500-2-2.500H.5z" /></Svg></IconButton>
      </Tray>
    </Taskbar>
  );
}

function App() {
  return (
    <Page>
      <GlobalStyle />
      <TitleBar>
        <Brand>
          <Svg w={6} h={8} stroke="#eaf3e4" strokeWidth="1.500"><path d="M6 1H1v3h4v3H0" /></Svg>
          WPS 表格
          <Caret c="#eaf3e4" s={4} />
        </Brand>
        <Menu>
          {menu.map((m) => (
            <MenuItem key={m} $wide={m.length > 2} $active={m === "插入"}>{m}</MenuItem>
          ))}
        </Menu>
        <Login>未登录</Login>
        <WinButtons>
          <WinButton $w={18} aria-label="皮肤"><ShirtIcon /></WinButton>
          <WinButton $w={20} aria-label="云服务"><Svg s={8} stroke="none"><path d="M4 0c2 0 2.500 1.500 2.500 2.500C9 3.500 8 8 4 8S-1 3.500 1.500 2.500C1.500 1.500 2 0 4 0z" fill="#7fa8e0" /><circle cx="4" cy="5" r="1.300" fill="#3c5f97" /></Svg></WinButton>
          <WinButton $w={22} aria-label="帮助"><Svg s={9} stroke="none"><circle cx="4.500" cy="4.500" r="4.500" fill="#4a86db" /><path d="M3 3.500c0-2 3-2 3 0 0 1-1.500 1-1.500 2M4.500 6.500v1" stroke="#e8f0fb" /></Svg><Caret s={4} c="#c9cad0" /></WinButton>
          <WinButton $w={30} aria-label="功能区"><Svg s={10} stroke="#b9bac2"><path d="M.5 1.500h9v8h-9zM.5 3h9M5 9V5M3.500 6.500L5 5l1.500 1.500" /></Svg></WinButton>
          <WinButton $w={18} aria-label="最小化"><Svg w={8} h={2} stroke="none"><path d="M0 0h8v1H0z" fill="#b9bac2" /></Svg></WinButton>
          <WinButton $w={34} aria-label="还原"><Svg w={8} h={6} stroke="#a9aab3"><path d="M.5 2.500h5v3h-5zM2 2V.5h5.500v3H6" /></Svg></WinButton>
          <WinButton $w={22} aria-label="关闭"><Svg s={6} stroke="#c5c6cd" strokeWidth="1.300"><path d="M.5.5l5 5M5.500.5l-5 5" /></Svg></WinButton>
        </WinButtons>
      </TitleBar>
      <RibbonBar />
      <Body>
        <Work>
          <DocumentBar />
          <FormulaBar>
            <NameBox>
              <input aria-label="名称框" defaultValue="D12" />
              <Caret s={4} />
            </NameBox>
            <FormulaTools>
              <IconButton $w={20} aria-label="查找"><Svg s={9} stroke="#6f6e78"><circle cx="3.800" cy="3.800" r="3" /><path d="M6 6l3 2.500M2.500 4h2.500" /></Svg></IconButton>
              <IconButton $w={22} aria-label="插入函数"><i>fx</i></IconButton>
            </FormulaTools>
            <FormulaInput aria-label="编辑栏" />
          </FormulaBar>
          <SheetArea>
            <SheetView>
              <Worksheet />
            </SheetView>
            <VScroll>
              <Splitter />
              <ScrollButton aria-label="向上"><Caret dir="up" c="#62616b" /></ScrollButton>
              <VThumb><Svg w={5} h={6} stroke="#bbbac2"><path d="M0 .5h5M0 2.500h5M0 4.500h5" /></Svg></VThumb>
              <ScrollButton $side aria-label="向下"><Caret c="#62616b" /></ScrollButton>
            </VScroll>
          </SheetArea>
          <BottomBars />
        </Work>
        <Rail>
          <RailHandle aria-label="展开任务窗格"><Caret dir="left" c="#e6f1e0" s={4} /></RailHandle>
        </Rail>
      </Body>
      <WindowsTaskbar />
      <Pointer width="12" height="18" viewBox="0 0 12 18" fill="#ececf0" stroke="#4b4b53">
        <path d="M1 1v12.500l3-2.700 2.200 5 2-1-2.200-4.800h4z" />
      </Pointer>
    </Page>
  );
}

export default App;
